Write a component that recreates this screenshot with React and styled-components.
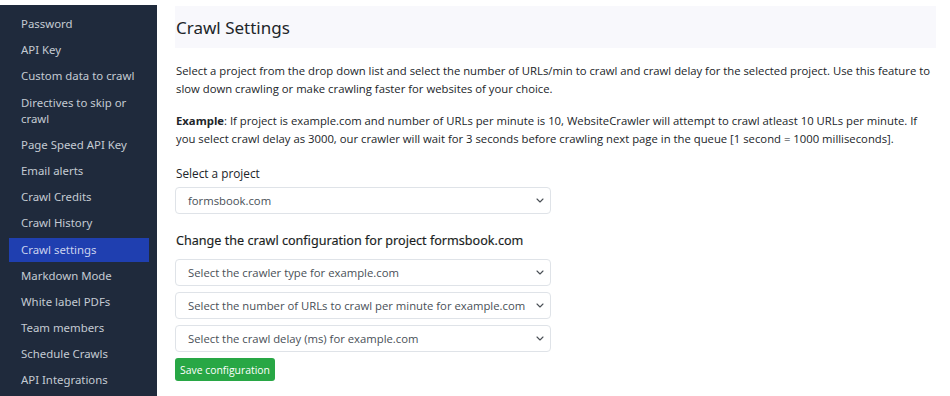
import React from "react";
import styled, { createGlobalStyle } from "styled-components";

const Global = createGlobalStyle`
  html, body { margin: 0; padding: 0; background: #ffffff; }
  body { font-family: "Open Sans", "Liberation Sans", sans-serif; color: #212529; }
  * { box-sizing: border-box; }
`;

const Page = styled.div`
  display: flex;
  align-items: flex-start;
  padding-top: 5px;
  width: 950px;
  height: 396px;
  overflow: hidden;
`;

const Sidebar = styled.nav`
  width: 157px;
  flex: none;
  height: 391px;
  background: #1f2a3c;
  padding: 7px 8px 0 9px;
  display: flex;
  flex-direction: column;
  gap: 2.2px;
`;

const NavItem = styled.a`
  display: block;
  padding: 4px 12px;
  line-height: 16px;
  font-family: "Noto Sans", "DejaVu Sans", sans-serif;
  font-size: 11.4px;
  color: ${(p) => (p.$active ? "#c9d2ee" : "#c4cad3")};
  background: ${(p) => (p.$active ? "#1f3fb0" : "transparent")};
  text-decoration: none;
`;

const Main = styled.main`
  margin-left: 18px;
  width: 761px;
  display: flex;
  flex-direction: column;
`;

const Header = styled.div`
  height: 42px;
  background: #f8f8fc;
  display: flex;
  align-items: center;
  margin-top: 1px;
`;

const Title = styled.h1`
  margin: 0 0 0 1px;
  font-family: "Noto Sans", "DejaVu Sans", sans-serif;
  font-weight: 400;
  font-size: 17px;
  color: #212529;
`;

const Para = styled.p`
  margin: ${(p) => p.$mt}px 0 0 1px;
  font-size: 11.3px;
  line-height: 17.5px;
  color: #212529;
`;

const Strong = styled.strong`
  font-weight: 700;
`;

const Label = styled.div`
  margin-top: 17px;
  font-size: 11.8px;
  line-height: 18px;
  margin-left: 1px;
`;

const SubTitle = styled.h2`
  margin: 18px 0 0 1px;
  font-family: "Noto Sans", "DejaVu Sans", sans-serif;
  font-weight: 400;
  font-size: 12.6px;
  line-height: 18px;
  color: #1a1e22;
  -webkit-text-stroke: 0.15px #1a1e22;
`;

const Form = styled.div`
  display: flex;
  flex-direction: column;
  align-items: flex-start;
  gap: 6px;
  margin-top: ${(p) => p.$mt}px;
`;

const SelectBox = styled.div`
  width: 376px;
  height: 27px;
  border: 1px solid #dfe3e8;
  border-radius: 4px;
  background: #fff;
  display: flex;
  align-items: center;
  justify-content: space-between;
  padding: 0 6px 0 12px;
  font-size: 11.3px;
  color: #495057;
  white-space: nowrap;
`;

const SaveButton = styled.button`
  width: 100px;
  height: 23px;
  border: none;
  border-radius: 3px;
  background: #28a745;
  color: #fff;
  font-family: "Open Sans", "Liberation Sans", sans-serif;
  font-size: 10.4px;
  padding: 0;
  cursor: pointer;
`;

const Chevron = () => (
  <svg width="8" height="5" viewBox="0 0 8 5" fill="none">
    <path d="M1 1l3 3 3-3" stroke="#4a4f55" strokeWidth="1.1" strokeLinecap="round" strokeLinejoin="round" />
  </svg>
);

const Select = ({ children }) => (
  <SelectBox>
    <span>{children}</span>
    <Chevron />
  </SelectBox>
);

const items = [
  "Password",
  "API Key",
  "Custom data to crawl",
  "Directives to skip or crawl",
  "Page Speed API Key",
  "Email alerts",
  "Crawl Credits",
  "Crawl History",
  "Crawl settings",
  "Markdown Mode",
  "White label PDFs",
  "Team members",
  "Schedule Crawls",
  "API Integrations",
];

export default function App() {
  return (
    <>
      <Global />
      <Page>
        <Sidebar>
          {items.map((it) => (
            <NavItem key={it} $active={it === "Crawl settings"}>
              {it}
            </NavItem>
          ))}
        </Sidebar>
        <Main>
          <Header>
            <Title>Crawl Settings</Title>
          </Header>
          <Para $mt={14}>
            Select a project from the drop down list and select the number of URLs/min to crawl and crawl delay for the selected project. Use this feature to slow down crawling or make crawling faster for websites of your choice.
          </Para>
          <Para $mt={15}>
            <Strong>Example</Strong>: If project is example.com and number of URLs per minute is 10, WebsiteCrawler will attempt to crawl atleast 10 URLs per minute. If you select crawl delay as 3000, our crawler will wait for 3 seconds before crawling next page in the queue [1 second = 1000 milliseconds].
          </Para>
          <Label>Select a project</Label>
          <Form $mt={5}>
            <Select>formsbook.com</Select>
          </Form>
          <SubTitle>Change the crawl configuration for project formsbook.com</SubTitle>
          <Form $mt={9}>
            <Select>Select the crawler type for example.com</Select>
            <Select>Select the number of URLs to crawl per minute for example.com</Select>
            <Select>Select the crawl delay (ms) for example.com</Select>
            <SaveButton>Save configuration</SaveButton>
          </Form>
        </Main>
      </Page>
    </>
  );
}
